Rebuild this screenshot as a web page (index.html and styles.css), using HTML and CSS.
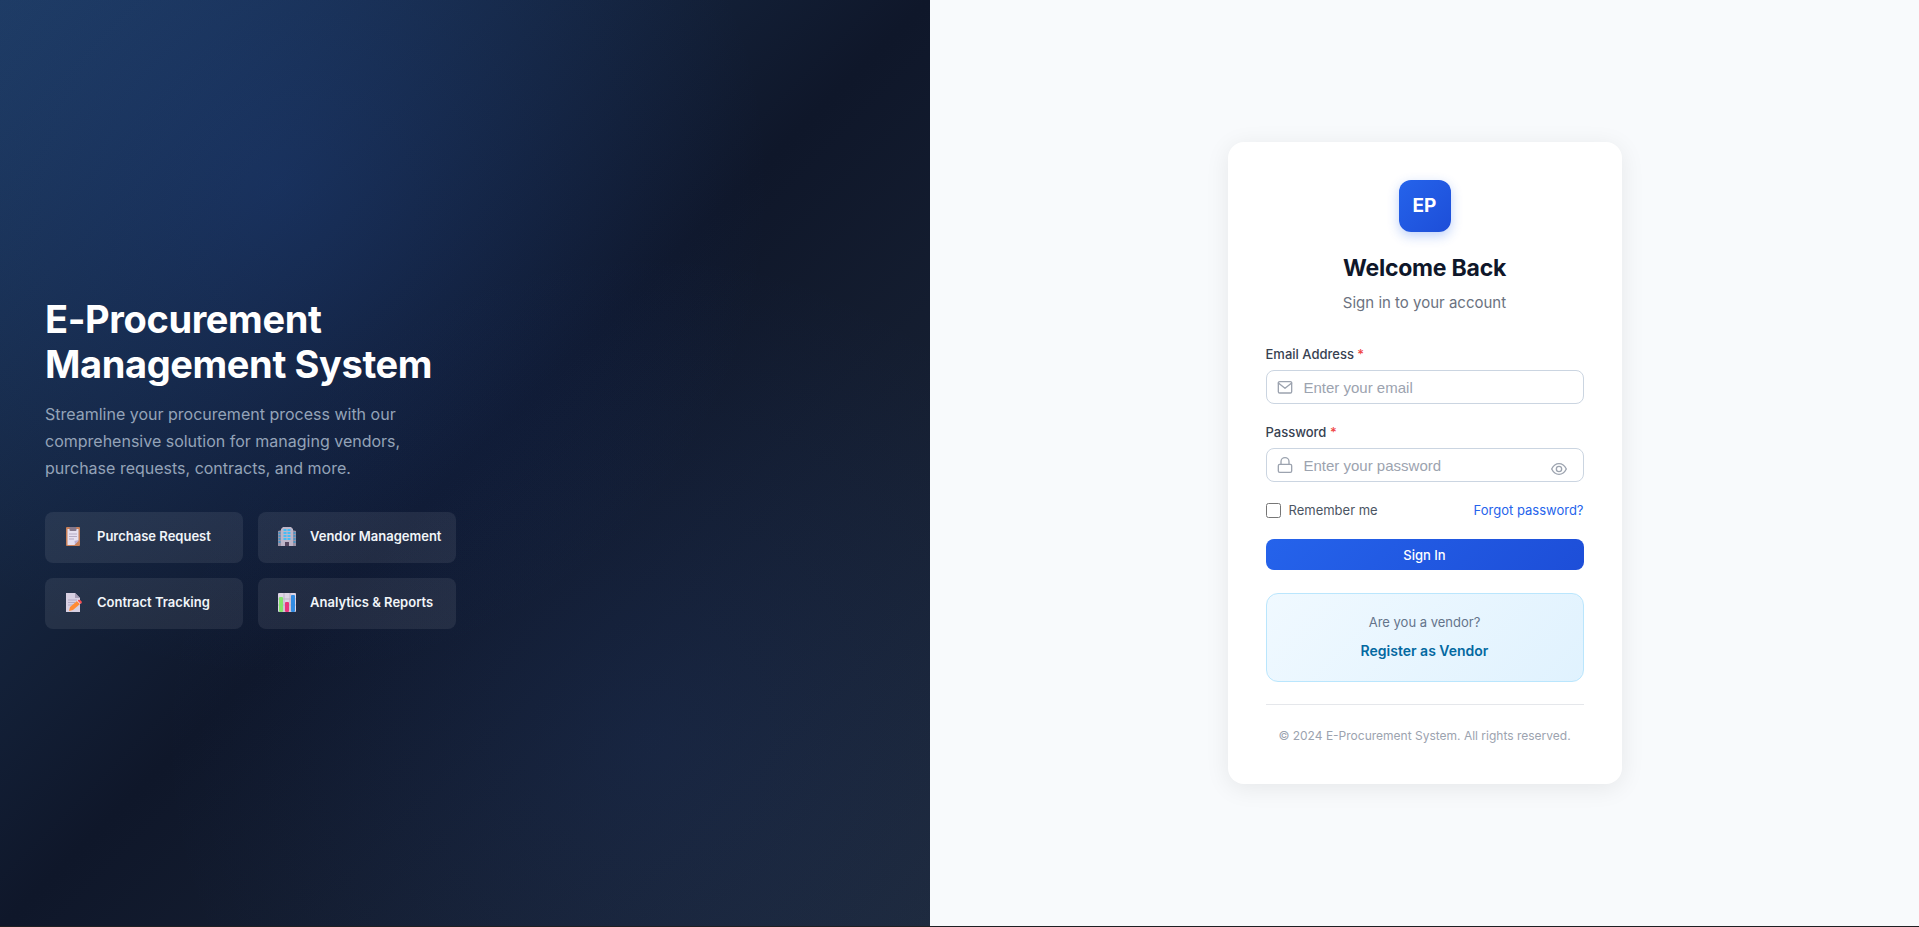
FILE: index.html
```
<!DOCTYPE html>
<html lang="en">
<head>
    <meta charset="UTF-8">
    <meta name="viewport" content="width=device-width, initial-scale=1.0">
    <title>E-Procurement - Login</title>
    <link rel="stylesheet" href="styles.css">
</head>
<body>

<div class="login-page">
    <section class="hero">
        <h1>E-Procurement<br>Management System</h1>
        <p class="hero-text">Streamline your procurement process with our comprehensive solution for managing vendors, purchase requests, contracts, and more.</p>

        <div class="features">
            <div class="feature">
                <svg class="feature-icon" viewBox="0 0 20 20">
                    <rect x="1" y="1" width="14" height="19" rx="1" fill="#c98058"/>
                    <path d="M2.500 3h11v11l-4 5h-7z" fill="#e6e0f0"/>
                    <path d="M13.500 14v1l-3.500 3.500-.5-3.500z" fill="#bbaed0"/>
                    <rect x="4.500" y="1" width="7" height="4" rx="1" fill="#85788c"/>
                    <path d="M4 8h8M4 10.500h8M4 13h5" stroke="#b4aac4"/>
                </svg>
                <span>Purchase Request</span>
            </div>
            <div class="feature">
                <svg class="feature-icon" viewBox="0 0 20 20">
                    <path d="M0 5l4-1v16H0zM18 5l-4-1v16h4z" fill="#9b92a6"/>
                    <path d="M5 1h8l2 2v17H3V3z" fill="#bdb5c8"/>
                    <path d="M7 3v12M11 3v12" stroke="#45bdf5" stroke-width="3" stroke-dasharray="2 1"/>
                    <path d="M1.500 6v12M16.500 6v12" stroke="#4794c4" stroke-width="2" stroke-dasharray="2 1"/>
                    <rect x="7" y="16" width="4" height="4" fill="#54455e"/>
                </svg>
                <span>Vendor Management</span>
            </div>
            <div class="feature">
                <svg class="feature-icon" viewBox="0 0 20 20">
                    <path d="M1 1h9l5 5v14H1z" fill="#d8d0e2"/>
                    <path d="M10 1l5 5h-5z" fill="#a99eb7"/>
                    <path d="M3 8h9M3 10.500h7M3 13h5" stroke="#b4aac4"/>
                    <path d="M4 19l1-4 7-6 3 3-7 6z" fill="#ff8b35"/>
                    <path d="M12 9l1-1 3 3-1 1z" fill="#e7d9e8"/>
                    <path d="M13 8q2-1 4 2l-1 2-3-3z" fill="#fa4f52"/>
                </svg>
                <span>Contract Tracking</span>
            </div>
            <div class="feature">
                <svg class="feature-icon" viewBox="0 0 20 20">
                    <rect x="0" y="1" width="18" height="19" rx="1" fill="#ddd5e4"/>
                    <path d="M0 7h18M0 13h18M6 1v19M12 1v19" stroke="#bdb3c8"/>
                    <rect x="1" y="5" width="4" height="15" rx="1" fill="#82e46b"/>
                    <rect x="7" y="10" width="4" height="10" rx="1" fill="#e8367d"/>
                    <rect x="13" y="3" width="4" height="17" rx="1" fill="#328ce2"/>
                </svg>
                <span>Analytics &amp; Reports</span>
            </div>
        </div>
    </section>

    <main class="form-side">
        <div class="card">
            <div class="logo">EP</div>
            <h2>Welcome Back</h2>
            <p class="subtitle">Sign in to your account</p>

            <form>
                <label class="field-label" for="email">Email Address <span class="required">*</span></label>
                <div class="field">
                    <svg class="field-icon" viewBox="0 0 24 24">
                        <rect x="2" y="4" width="20" height="17" rx="2"/>
                        <path d="M2 6l10 8 10-8"/>
                    </svg>
                    <input type="email" id="email" placeholder="Enter your email">
                </div>

                <label class="field-label" for="password">Password <span class="required">*</span></label>
                <div class="field">
                    <svg class="field-icon" viewBox="0 0 24 24">
                        <rect x="2" y="11" width="20" height="12" rx="2"/>
                        <path d="M6 11V7a6 6 0 0 1 12 0v4"/>
                    </svg>
                    <input type="password" id="password" placeholder="Enter your password">
                    <button type="button" class="toggle" aria-label="Show password">
                        <svg class="field-icon" viewBox="0 0 24 24">
                            <path d="M1 12s4-8 11-8 11 8 11 8-4 8-11 8S1 12 1 12z"/>
                            <circle cx="12" cy="12" r="4"/>
                        </svg>
                    </button>
                </div>

                <div class="options">
                    <label class="remember"><input type="checkbox" id="remember"> Remember me</label>
                    <a href="#">Forgot password?</a>
                </div>

                <button type="submit" class="submit">Sign In</button>
            </form>

            <div class="vendor">
                <p>Are you a vendor?</p>
                <a href="#">Register as Vendor</a>
            </div>

            <footer>© 2024 E-Procurement System. All rights reserved.</footer>
        </div>
    </main>
</div>

</body>
</html>
```
FILE: styles.css
```
* {
    box-sizing: border-box;
}
body {
    margin: 0;
    font-family: Inter, sans-serif;
    background: #f8fafc;
}
h1, h2, p {
    margin: 0;
}
a {
    text-decoration: none;
}
.login-page {
    display: flex;
    min-height: 100vh;
    border-bottom: 1px solid #1f2023;
}
.hero {
    width: 930px;
    max-width: 50%;
    padding: 24px 45px;
    display: flex;
    flex-direction: column;
    justify-content: center;
    background:
        radial-gradient(circle at 30% 20%, rgba(37, 99, 235, 0.15) 0%, transparent 50%),
        radial-gradient(circle at 70% 80%, rgba(37, 99, 235, 0.08) 0%, transparent 50%),
        linear-gradient(135deg, #1e3a5f 0%, #0f172a 50%, #1e293b 100%);
}
.hero h1 {
    color: #fff;
    font-size: 38px;
    line-height: 45px;
    font-weight: 700;
    letter-spacing: -0.01em;
}
.hero-text {
    max-width: 384px;
    margin: 14px 0 30px;
    color: #94a3b8;
    font-size: 16px;
    line-height: 27px;
}
.features {
    display: grid;
    grid-template-columns: 1fr 1fr;
    gap: 15px;
    max-width: 411px;
}
.feature {
    display: flex;
    align-items: center;
    gap: 12px;
    height: 51px;
    padding: 0 12px 4px 20px;
    border-radius: 8px;
    background: rgba(255, 255, 255, 0.08);
    color: #f1f5f9;
    font-size: 13px;
    font-weight: 600;
    white-space: nowrap;
}
.feature-icon {
    width: 20px;
    height: 20px;
    flex: none;
}
.form-side {
    flex: 1;
    display: flex;
    align-items: center;
    justify-content: center;
    padding: 24px;
}
.card {
    width: 100%;
    max-width: 394px;
    padding: 38px;
    border-radius: 16px;
    background: #fff;
    box-shadow: 0 4px 24px rgba(0, 0, 0, 0.08);
    text-align: center;
}
.logo {
    width: 52px;
    height: 52px;
    margin: 0 auto 20px;
    border-radius: 12px;
    background: linear-gradient(135deg, #2563eb, #1d4ed8);
    box-shadow: 0 4px 12px rgba(37, 99, 235, 0.3);
    color: #fff;
    font-size: 19px;
    line-height: 52px;
    font-weight: 700;
}
.card h2 {
    color: #0f172a;
    font-size: 23px;
    line-height: 32px;
    font-weight: 700;
    letter-spacing: -0.01em;
}
.subtitle {
    margin: 8px 0 30px;
    color: #6b7280;
    font-size: 15px;
    line-height: 22px;
}
.field-label {
    display: block;
    margin-bottom: 6px;
    color: #374151;
    font-size: 13px;
    line-height: 20px;
    font-weight: 500;
    text-align: left;
}
.required {
    color: #ef4444;
}
.field {
    display: flex;
    align-items: center;
    gap: 11px;
    height: 34px;
    margin-bottom: 18px;
    padding: 0 16px 0 10px;
    border: 1px solid #cbd5e1;
    border-radius: 8px;
    background: #fff;
}
.field input {
    flex: 1;
    min-width: 0;
    padding: 0;
    border: none;
    outline: none;
    background: none;
    color: #1f2937;
    font-family: "Liberation Sans", Arial, sans-serif;
    font-size: 15px;
}
.field input::placeholder {
    color: #9ca3af;
}
.field-icon {
    display: block;
    width: 16px;
    height: 16px;
    flex: none;
    fill: none;
    stroke: #9ca3af;
    stroke-width: 2;
    stroke-linecap: round;
    stroke-linejoin: round;
}
.toggle {
    padding: 8px 0 0;
    border: none;
    background: none;
    cursor: pointer;
}
.options {
    display: flex;
    justify-content: space-between;
    align-items: center;
    margin-bottom: 18px;
    font-size: 13px;
    line-height: 21px;
}
.remember {
    display: flex;
    align-items: center;
    gap: 8px;
    color: #4b5563;
}
.remember input {
    width: 15px;
    height: 15px;
    margin: 0;
}
.options a {
    color: #2563eb;
}
.submit {
    display: block;
    width: 100%;
    height: 31px;
    border: none;
    border-radius: 8px;
    background: linear-gradient(135deg, #2563eb, #1d4ed8);
    color: #fff;
    font-family: inherit;
    font-size: 13px;
    font-weight: 500;
    cursor: pointer;
}
.vendor {
    margin-top: 23px;
    padding: 18px 18px 19px;
    border: 1px solid #bae6fd;
    border-radius: 12px;
    background: linear-gradient(135deg, #f0f9ff, #e0f2fe);
    font-size: 13px;
}
.vendor p {
    margin-bottom: 8px;
    color: #64748b;
    line-height: 20px;
}
.vendor a {
    display: block;
    color: #0369a1;
    font-size: 14px;
    line-height: 22px;
    font-weight: 600;
}
footer {
    margin-top: 22px;
    padding-top: 21px;
    border-top: 1px solid #e5e7eb;
    color: #9ca3af;
    font-size: 12px;
    line-height: 20px;
}
```
